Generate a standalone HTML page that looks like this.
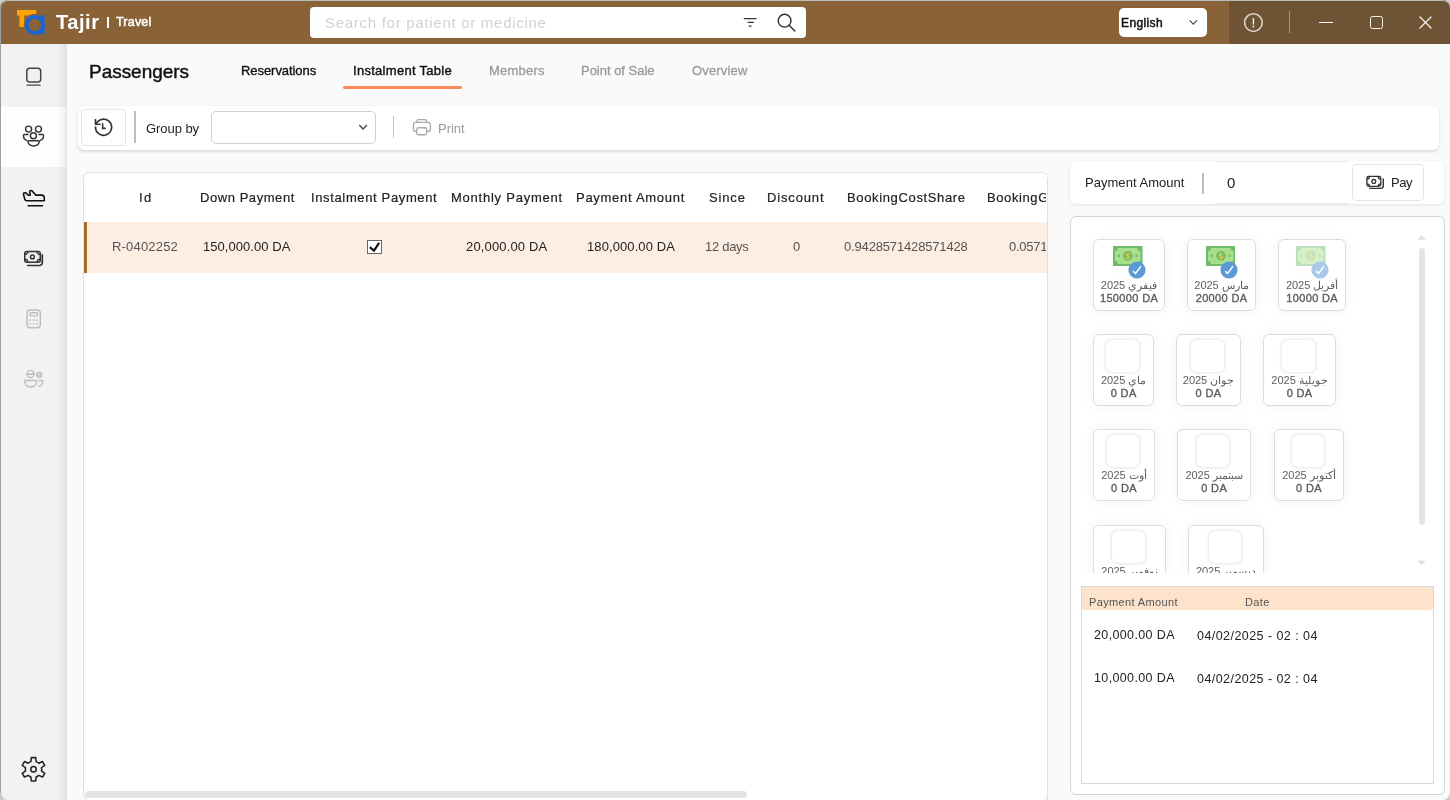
<!DOCTYPE html>
<html><head><meta charset="utf-8">
<style>
*{box-sizing:border-box;margin:0;padding:0}
html,body{width:1450px;height:800px;overflow:hidden;background:#c9cdd2;font-family:"Liberation Sans",sans-serif}
.win{position:absolute;left:0;top:0;width:1450px;height:800px;background:#fafafa;border-radius:8px;overflow:hidden}
.frame{position:absolute;left:0;top:0;width:1450px;height:800px;border-radius:8px;border-left:1px solid #9da1a5;border-top:1px solid #b9bcc0;pointer-events:none}
.a{position:absolute}
.t{position:absolute;white-space:nowrap;line-height:1;font-family:"Liberation Sans",sans-serif;will-change:transform}
.hdr{position:absolute;left:0;top:0;width:1450px;height:44px;background:#8a6238}
.hdr2{position:absolute;left:1229px;top:0;width:221px;height:44px;background:#6f5335}
.side{position:absolute;left:0;top:44px;width:67px;height:756px;background:#f2f2f2}
.sideshade{position:absolute;left:52px;top:44px;width:15px;height:756px;background:linear-gradient(to right,rgba(0,0,0,0) 0,rgba(0,0,0,0.015) 50%,rgba(0,0,0,0.075) 100%)}
.card{position:absolute;background:#fff;border-radius:6px}
.mc{will-change:transform;position:absolute;height:72px;border:1px solid #dcdcdc;border-radius:6px;background:#fff;box-shadow:0 0 12px 2px rgba(0,0,0,0.035)}
.mc .ico{position:absolute;border-radius:6px}
.ml1{position:absolute;left:0;right:0;top:39.3px;text-align:center;font-size:11px;line-height:13px;color:#606060;white-space:nowrap;letter-spacing:0}
.ml2{position:absolute;left:0;right:0;top:52.1px;text-align:center;font-size:11px;line-height:13px;color:#5c5c5c;white-space:nowrap;font-weight:normal;letter-spacing:0.35px;-webkit-text-stroke:0.35px #5c5c5c}
.dg{letter-spacing:0.75px}
</style></head><body>
<div class="win">
  <!-- header -->
  <div class="hdr"></div>
  <div class="hdr2"></div>
  <!-- logo -->
  <svg class="a" style="left:0;top:0" width="60" height="44" viewBox="0 0 60 44">
    <path d="M17 10H36.3V15.5H24.2V26.9H19.4V15.5H17Z" fill="#ffa400"/>
    <circle cx="35" cy="25" r="11.2" fill="#8a6238"/>
    <rect x="39.8" y="13.8" width="5.8" height="21.4" fill="#8a6238"/>
    <circle cx="34.9" cy="25" r="8.1" fill="none" stroke="#1565d8" stroke-width="3.8"/>
    <rect x="40.8" y="15" width="3.8" height="19.2" fill="#1565d8"/>
  </svg>
  <div class="a" style="left:107px;top:17px;width:2px;height:11px;background:#fff"></div>
  <!-- search -->
  <div class="a" style="left:310px;top:7px;width:496px;height:31px;background:#fff;border-radius:4px"></div>
  <svg class="a" style="left:740px;top:12px" width="20" height="20" viewBox="0 0 20 20">
    <path d="M4.2 6.6H16.1M8 10.3H13.4M9.2 14H11.1" stroke="#333" stroke-width="1.25" stroke-linecap="round"/>
  </svg>
  <svg class="a" style="left:774px;top:10px" width="24" height="24" viewBox="0 0 24 24">
    <circle cx="10.6" cy="10.7" r="6.4" fill="none" stroke="#333" stroke-width="1.45"/>
    <path d="M15.1 15.2L20.8 20.9" stroke="#333" stroke-width="1.45" stroke-linecap="round"/>
  </svg>
  <!-- language -->
  <div class="a" style="left:1118.5px;top:8.3px;width:88px;height:28.5px;background:#fff;border-radius:5px"></div>
  <svg class="a" style="left:1186px;top:16px" width="14" height="12" viewBox="0 0 14 12">
    <path d="M3.7 4.4L7.3 8.2L10.9 4.4" stroke="#444" stroke-width="1.1" fill="none"/>
  </svg>
  <!-- info -->
  <svg class="a" style="left:1241px;top:10px" width="24" height="24" viewBox="0 0 24 24">
    <circle cx="12.4" cy="12.6" r="8.8" fill="none" stroke="#e2dbd2" stroke-width="1.5"/>
    <path d="M12.4 8.6V14" stroke="#f4f0ea" stroke-width="1.4" stroke-linecap="round"/>
    <circle cx="12.4" cy="16.5" r="0.95" fill="#f4f0ea"/>
  </svg>
  <div class="a" style="left:1289px;top:11px;width:1px;height:22px;background:#a8957f"></div>
  <div class="a" style="left:1319px;top:21.8px;width:14px;height:1.3px;background:#fff"></div>
  <div class="a" style="left:1370px;top:16px;width:12.5px;height:13px;border:1.3px solid #f4f0ea;border-radius:2.5px"></div>
  <svg class="a" style="left:1416px;top:13px" width="20" height="20" viewBox="0 0 20 20">
    <path d="M4 4L15 15M15 4L4 15" stroke="#f4f0ea" stroke-width="1.3" stroke-linecap="round"/>
  </svg>

  <!-- sidebar -->
  <div class="side"></div>
  <div class="a" style="left:0;top:106.5px;width:66px;height:60.5px;background:#fefefe"></div>
  <div class="sideshade"></div>
  <svg class="a" style="left:13px;top:55px" width="40" height="40" viewBox="0 0 40 40">
    <rect x="13.8" y="13.3" width="13.9" height="13.6" rx="3" fill="none" stroke="#444" stroke-width="1.5"/>
    <path d="M13.5 30.1H27.5" stroke="#444" stroke-width="1.3"/>
  </svg>
  <svg class="a" style="left:13px;top:116px" width="40" height="40" viewBox="0 0 40 40">
    <g fill="none" stroke="#333" stroke-width="1.45">
    <circle cx="15.6" cy="13.1" r="3"/><circle cx="25.5" cy="13.1" r="3"/><circle cx="20.4" cy="19.75" r="3"/>
    <path d="M10.5 18.5H15.6M10.5 18.5V19.5A5 5 0 0 0 14 24.5"/>
    <path d="M30.5 18.5H25.4M30.5 18.5V19.5A5 5 0 0 1 27 24.5"/>
    <path d="M15.3 24.75H25.9A0.6 0.6 0 0 1 26.4 25.4V25.6A6 5.8 0 0 1 14.8 25.6V25.4A0.6 0.6 0 0 1 15.3 24.75Z"/>
    </g>
  </svg>
  <svg class="a" style="left:13px;top:178px" width="40" height="40" viewBox="0 0 40 40">
    <path d="M10.5 16.2C10.3 15.3 10.9 14.6 11.8 14.7L12.8 14.9L15.3 17.2H17.2L16.7 13.6C16.6 12.9 17.2 12.4 17.9 12.5L18.9 12.7L22.7 17.1H28.7A2.9 2.9 0 0 1 31.3 20V22.75H13.6A1.9 1.9 0 0 1 11.8 21.3Z" fill="none" stroke="#111" stroke-width="1.6" stroke-linejoin="round"/>
    <path d="M15.2 27.75H29.5" stroke="#111" stroke-width="1.6" stroke-linecap="round"/>
  </svg>
  <svg class="a" style="left:13px;top:238px" width="40" height="40" viewBox="0 0 40 40">
    <g fill="none" stroke="#333" stroke-width="1.5">
      <rect x="11.75" y="13.5" width="15.5" height="10.75" rx="2"/>
      <circle cx="19.4" cy="18.9" r="1.9"/>
      <path d="M11.75 16.6A3.1 3.1 0 0 0 14.85 13.5M24.15 13.5A3.1 3.1 0 0 0 27.25 16.6M11.75 21.15A3.1 3.1 0 0 1 14.85 24.25M24.15 24.25A3.1 3.1 0 0 1 27.25 21.15"/>
      <path d="M29.3 16.2V24.7A2.8 2.8 0 0 1 26.5 27.5H14" stroke-width="1.7"/>
    </g>
  </svg>
  <svg class="a" style="left:13px;top:298px" width="40" height="40" viewBox="0 0 40 40">
    <g fill="none" stroke="#bdbdbd" stroke-width="1.4">
      <rect x="14" y="12" width="13.3" height="17.8" rx="3"/>
      <rect x="16.8" y="14.7" width="7.7" height="3.2" rx="1.2"/>
    </g>
    <g fill="#bdbdbd">
      <rect x="16.3" y="21.3" width="1.6" height="1.6"/><rect x="19.8" y="21.3" width="1.6" height="1.6"/><rect x="23.3" y="21.3" width="1.6" height="1.6"/>
      <rect x="16.3" y="25" width="1.6" height="1.6"/><rect x="19.8" y="25" width="1.6" height="1.6"/><rect x="23.3" y="25" width="1.6" height="1.6"/>
    </g>
  </svg>
  <svg class="a" style="left:13px;top:360px" width="40" height="40" viewBox="0 0 40 40">
    <g fill="none" stroke="#bdbdbd" stroke-width="1.4">
      <circle cx="17.5" cy="14" r="3.6"/>
      <path d="M14 13.5C16 14.5 19 14.5 21 13.5"/>
      <circle cx="26.2" cy="14.8" r="2.4"/>
      <path d="M23.7 14.8H29"/>
      <path d="M11.9 20.5H23.5V22A4.8 4.8 0 0 1 18.7 26.8H16.7A4.8 4.8 0 0 1 11.9 22Z"/>
      <path d="M25.5 20.5H29.6V22A4.5 4.5 0 0 1 25.3 26.2"/>
    </g>
  </svg>
  <svg class="a" style="left:13px;top:749px" width="40" height="40" viewBox="0 0 40 40">
    <path d="M17.86 12.64L18.33 8.60L22.67 8.60L23.14 12.64A8.1 8.1 0 0 1 25.81 14.19L29.55 12.57L31.72 16.33L28.45 18.75A8.1 8.1 0 0 1 28.45 21.85L31.72 24.27L29.55 28.03L25.81 26.41A8.1 8.1 0 0 1 23.14 27.96L22.67 32.00L18.33 32.00L17.86 27.96A8.1 8.1 0 0 1 15.19 26.41L11.45 28.03L9.28 24.27L12.55 21.85A8.1 8.1 0 0 1 12.55 18.75L9.28 16.33L11.45 12.57L15.19 14.19A8.1 8.1 0 0 1 17.86 12.64Z" fill="none" stroke="#222" stroke-width="1.55" stroke-linejoin="round"/>
    <circle cx="20.5" cy="20.3" r="2.75" fill="none" stroke="#222" stroke-width="1.5"/>
  </svg>

  <div class="a" style="left:342.8px;top:85.5px;width:119.2px;height:3px;background:#ff8a5c;border-radius:2px"></div>
  <!-- toolbar card -->
  <div class="card" style="left:78.3px;top:105.5px;width:1361px;height:44px;box-shadow:0 1.5px 3px rgba(0,0,0,0.12)"></div>
  <div class="a" style="left:81.3px;top:109px;width:44.5px;height:36.6px;border:1px solid #e4e4e4;border-radius:4px"></div>
  <svg class="a" style="left:88px;top:112px" width="30" height="30" viewBox="0 0 30 30">
    <g fill="none" stroke="#333" stroke-width="1.6">
    <path d="M7.5 14.3A8.1 8.1 0 1 0 9.9 9.4L7.9 11.6"/>
    <path d="M7.5 7.1V12.2H12.5"/>
    <path d="M14.6 11.2V16.4H17.8"/>
    </g>
  </svg>
  <div class="a" style="left:134px;top:111.3px;width:2px;height:32.2px;background:#b9bdc8"></div>
  <div class="a" style="left:211.4px;top:111px;width:164.3px;height:32.5px;border:1px solid #cfcfcf;border-radius:5px;background:#fff"></div>
  <svg class="a" style="left:355px;top:120px" width="16" height="14" viewBox="0 0 16 14">
    <path d="M4.3 5L8.1 9L11.9 5" stroke="#444" stroke-width="1.3" fill="none"/>
  </svg>
  <div class="a" style="left:393px;top:116px;width:1px;height:22px;background:#c3c7d1"></div>
  <svg class="a" style="left:406px;top:112px" width="30" height="30" viewBox="0 0 30 30">
    <g fill="none" stroke="#aaa" stroke-width="1.35">
      <path d="M11 10.3V9.2A1.6 1.6 0 0 1 12.6 7.6H19A1.6 1.6 0 0 1 20.6 9.2V10.3"/>
      <path d="M10.7 19.5H9.8A2.3 2.3 0 0 1 7.5 17.2V12.6A2.3 2.3 0 0 1 9.8 10.3H22.1A2.3 2.3 0 0 1 24.4 12.6V17.2A2.3 2.3 0 0 1 22.1 19.5H20.9"/>
      <rect x="10.7" y="15.7" width="9.9" height="7" rx="1.8"/>
    </g>
  </svg>

  <!-- table card -->
  <div class="card" style="left:83px;top:172.2px;width:964.5px;height:628.5px;border:1px solid #e0e0e0;border-radius:6px;overflow:hidden">
    <div class="a" style="left:0;top:49px;width:964px;height:50.5px;background:#fdeee3"></div>
    <div class="a" style="left:0;top:49px;width:3.3px;height:50.5px;background:#a8692a"></div>
    <div class="a" style="left:1px;top:618px;width:662px;height:7px;background:#e3e3e3;border-radius:4px"></div>
  </div>
  <!-- checkbox -->
  <div class="a" style="left:367.2px;top:240.2px;width:14.6px;height:13.4px;border:1px solid #666;background:#fff;border-radius:0"></div>
  <svg class="a" style="left:366px;top:239px" width="17" height="16" viewBox="0 0 17 16">
    <path d="M3.8 8.2L8 11.7L13.1 3.9" stroke="#111" stroke-width="2.2" fill="none"/>
  </svg>
  <!-- table right clip mask -->
  <div class="a" style="left:1047px;top:172px;width:20px;height:628px;background:#fafafa"></div>
  <div class="a" style="left:1046.5px;top:178px;width:1px;height:622px;background:#e0e0e0"></div>

  <!-- payment amount card -->
  <div class="card" style="left:1070px;top:161px;width:374px;height:43.4px;box-shadow:0 1px 3px rgba(0,0,0,0.10)"></div>
  <div class="a" style="left:1202px;top:172.5px;width:2px;height:21.2px;background:#b9bdc8"></div>
  <div class="a" style="left:1214.5px;top:161px;width:133px;height:43.4px;border-top:1px solid #e6e9ee;border-bottom:1px solid #e6e9ee"></div>
  <div class="a" style="left:1352px;top:164px;width:71.5px;height:36.7px;border:1px solid #e4e4e4;border-radius:4px;background:#fff"></div>
  <svg class="a" style="left:1361px;top:168px" width="28" height="28" viewBox="0 0 28 28">
    <g fill="none" stroke="#333" stroke-width="1.3">
      <rect x="5.9" y="8.4" width="13.9" height="10" rx="1.8"/>
      <circle cx="12.8" cy="13.4" r="1.9"/>
      <path d="M5.9 11A2.6 2.6 0 0 0 8.5 8.4M17.2 8.4A2.6 2.6 0 0 0 19.8 11M5.9 15.8A2.6 2.6 0 0 1 8.5 18.4M17.2 18.4A2.6 2.6 0 0 1 19.8 15.8"/>
      <path d="M22.3 10.6V17.8A2.6 2.6 0 0 1 19.7 20.4H8.3" stroke-width="1.4"/>
    </g>
  </svg>

  <!-- months panel -->
  <div class="card" style="left:1070px;top:216px;width:374.5px;height:579px;border:1px solid #d4d4d4;border-radius:6px"></div>
  <div class="a" style="left:1080px;top:226px;width:330px;height:347px;overflow:hidden">
    <div class="a" style="left:-1080px;top:-226px;width:1450px;height:800px">
<div class="mc" style="left:1093.4px;top:239.1px;width:72.1px;"><div class="ico" style="left:19.0px;top:5.8px;width:30px;height:32.5px;background:#fff;box-shadow:0 0 2px rgba(0,0,0,0.06)"><div style="position:absolute;left:0;top:0;width:29.5px;height:20px;opacity:1;overflow:hidden"><svg width="29.5" height="20" viewBox="0 0 29.5 20" style="position:absolute;left:0;top:0"><rect x="0" y="0" width="29.5" height="20" fill="#6dbb6b"/><path d="M5 2H24.5A3 3 0 0 0 27.5 5V15A3 3 0 0 0 24.5 18H5A3 3 0 0 0 2 15V5A3 3 0 0 0 5 2Z" fill="#a9de8c"/><circle cx="14.9" cy="9.85" r="4.8" fill="#6dbb6b"/><circle cx="5.9" cy="9.85" r="1.3" fill="#6dbb6b"/><circle cx="23.6" cy="9.85" r="1.3" fill="#6dbb6b"/><text x="14.9" y="12.9" font-size="8.5" font-family="Liberation Sans" font-weight="bold" fill="#f4c53e" text-anchor="middle">$</text></svg></div><svg width="20" height="20" viewBox="0 0 20 20" style="position:absolute;left:13.7px;top:13.9px"><circle cx="10" cy="10" r="8.6" fill="#5b9bd5"/><path d="M6.6 11.6L8.6 13.4L13.6 6.6" stroke="#fff" stroke-width="1.5" fill="none" stroke-linecap="round" stroke-linejoin="round"/></svg></div><div class="ml1">فيفري <span class=dg>2025</span></div><div class="ml2">150000 DA</div></div>
<div class="mc" style="left:1187.4px;top:239.1px;width:69.1px;"><div class="ico" style="left:17.5px;top:5.8px;width:30px;height:32.5px;background:#fff;box-shadow:0 0 2px rgba(0,0,0,0.06)"><div style="position:absolute;left:0;top:0;width:29.5px;height:20px;opacity:1;overflow:hidden"><svg width="29.5" height="20" viewBox="0 0 29.5 20" style="position:absolute;left:0;top:0"><rect x="0" y="0" width="29.5" height="20" fill="#6dbb6b"/><path d="M5 2H24.5A3 3 0 0 0 27.5 5V15A3 3 0 0 0 24.5 18H5A3 3 0 0 0 2 15V5A3 3 0 0 0 5 2Z" fill="#a9de8c"/><circle cx="14.9" cy="9.85" r="4.8" fill="#6dbb6b"/><circle cx="5.9" cy="9.85" r="1.3" fill="#6dbb6b"/><circle cx="23.6" cy="9.85" r="1.3" fill="#6dbb6b"/><text x="14.9" y="12.9" font-size="8.5" font-family="Liberation Sans" font-weight="bold" fill="#f4c53e" text-anchor="middle">$</text></svg></div><svg width="20" height="20" viewBox="0 0 20 20" style="position:absolute;left:13.7px;top:13.9px"><circle cx="10" cy="10" r="8.6" fill="#5b9bd5"/><path d="M6.6 11.6L8.6 13.4L13.6 6.6" stroke="#fff" stroke-width="1.5" fill="none" stroke-linecap="round" stroke-linejoin="round"/></svg></div><div class="ml1">مارس <span class=dg>2025</span></div><div class="ml2">20000 DA</div></div>
<div class="mc" style="left:1278.4px;top:239.1px;width:68.3px;"><div class="ico" style="left:17.1px;top:5.8px;width:30px;height:32.5px;background:#fff;box-shadow:0 0 2px rgba(0,0,0,0.06)"><div style="position:absolute;left:0;top:0;width:29.5px;height:20px;opacity:0.45;overflow:hidden"><svg width="29.5" height="20" viewBox="0 0 29.5 20" style="position:absolute;left:0;top:0"><rect x="0" y="0" width="29.5" height="20" fill="#6dbb6b"/><path d="M5 2H24.5A3 3 0 0 0 27.5 5V15A3 3 0 0 0 24.5 18H5A3 3 0 0 0 2 15V5A3 3 0 0 0 5 2Z" fill="#a9de8c"/><circle cx="14.9" cy="9.85" r="4.8" fill="#6dbb6b"/><circle cx="5.9" cy="9.85" r="1.3" fill="#6dbb6b"/><circle cx="23.6" cy="9.85" r="1.3" fill="#6dbb6b"/><text x="14.9" y="12.9" font-size="8.5" font-family="Liberation Sans" font-weight="bold" fill="#f4c53e" text-anchor="middle">$</text></svg></div><svg width="20" height="20" viewBox="0 0 20 20" style="position:absolute;left:13.7px;top:13.9px"><circle cx="10" cy="10" r="8.6" fill="#a9c8ea"/><path d="M6.6 11.6L8.6 13.4L13.6 6.6" stroke="#fff" stroke-width="1.5" fill="none" stroke-linecap="round" stroke-linejoin="round"/></svg></div><div class="ml1">أفريل <span class=dg>2025</span></div><div class="ml2">10000 DA</div></div>
<div class="mc" style="left:1093.4px;top:334.3px;width:61.3px;"><div class="ico" style="left:12.4px;top:5.3px;width:32.4px;height:32.2px;background:#fff;border-radius:6px;box-shadow:0 0 3px 0.5px rgba(0,0,0,0.10)"></div><div class="ml1">ماي <span class=dg>2025</span></div><div class="ml2">0 DA</div></div>
<div class="mc" style="left:1176.3px;top:334.3px;width:65.1px;"><div class="ico" style="left:14.4px;top:5.3px;width:32.4px;height:32.2px;background:#fff;border-radius:6px;box-shadow:0 0 3px 0.5px rgba(0,0,0,0.10)"></div><div class="ml1">جوان <span class=dg>2025</span></div><div class="ml2">0 DA</div></div>
<div class="mc" style="left:1263.4px;top:334.3px;width:73.2px;"><div class="ico" style="left:18.4px;top:5.3px;width:32.4px;height:32.2px;background:#fff;border-radius:6px;box-shadow:0 0 3px 0.5px rgba(0,0,0,0.10)"></div><div class="ml1">جويلية <span class=dg>2025</span></div><div class="ml2">0 DA</div></div>
<div class="mc" style="left:1093.4px;top:429.2px;width:62.0px;"><div class="ico" style="left:12.8px;top:5.3px;width:32.4px;height:32.2px;background:#fff;border-radius:6px;box-shadow:0 0 3px 0.5px rgba(0,0,0,0.10)"></div><div class="ml1">أوت <span class=dg>2025</span></div><div class="ml2">0 DA</div></div>
<div class="mc" style="left:1177.3px;top:429.2px;width:74.3px;"><div class="ico" style="left:18.9px;top:5.3px;width:32.4px;height:32.2px;background:#fff;border-radius:6px;box-shadow:0 0 3px 0.5px rgba(0,0,0,0.10)"></div><div class="ml1">سبتمبر <span class=dg>2025</span></div><div class="ml2">0 DA</div></div>
<div class="mc" style="left:1273.5px;top:429.2px;width:69.9px;"><div class="ico" style="left:16.8px;top:5.3px;width:32.4px;height:32.2px;background:#fff;border-radius:6px;box-shadow:0 0 3px 0.5px rgba(0,0,0,0.10)"></div><div class="ml1">أكتوبر <span class=dg>2025</span></div><div class="ml2">0 DA</div></div>
<div class="mc" style="left:1093.4px;top:525.2px;width:73.1px;"><div class="ico" style="left:18.3px;top:5.3px;width:32.4px;height:32.2px;background:#fff;border-radius:6px;box-shadow:0 0 3px 0.5px rgba(0,0,0,0.10)"></div><div class="ml1">نوفمبر <span class=dg>2025</span></div><div class="ml2">0 DA</div></div>
<div class="mc" style="left:1188.1px;top:525.2px;width:76.3px;"><div class="ico" style="left:20.0px;top:5.3px;width:32.4px;height:32.2px;background:#fff;border-radius:6px;box-shadow:0 0 3px 0.5px rgba(0,0,0,0.10)"></div><div class="ml1">ديسمبر <span class=dg>2025</span></div><div class="ml2">0 DA</div></div>
    </div>
  </div>
  <svg class="a" style="left:1416px;top:234px" width="12" height="8" viewBox="0 0 12 8"><path d="M1.2 5.8L5.5 1.8L9.8 5.8Z" fill="#e0e0e0"/></svg>
  <div class="a" style="left:1419px;top:248px;width:6px;height:277px;background:#e4e4e4;border-radius:3px"></div>
  <svg class="a" style="left:1416px;top:559px" width="12" height="8" viewBox="0 0 12 8"><path d="M1.2 1.8L5.5 5.8L9.8 1.8Z" fill="#e0e0e0"/></svg>

  <!-- history -->
  <div class="a" style="left:1081px;top:586px;width:353px;height:198px;border:1px solid #d9d9d9;background:#fff"></div>
  <div class="a" style="left:1082px;top:587px;width:351px;height:22.6px;background:#fde3cb;border-radius:0 0 3px 3px"></div>

<div class="a" style="left:0;top:0;width:1046px;height:800px;overflow:hidden"><div class="t" style="left:138.86px;top:190.50px;font-size:13px;color:#222;font-weight:normal;letter-spacing:1.500px;-webkit-text-stroke:0.2px #222;">Id</div>
<div class="t" style="left:199.76px;top:190.50px;font-size:13px;color:#222;font-weight:normal;letter-spacing:0.558px;-webkit-text-stroke:0.2px #222;">Down Payment</div>
<div class="t" style="left:311.20px;top:190.50px;font-size:13px;color:#222;font-weight:normal;letter-spacing:0.635px;-webkit-text-stroke:0.2px #222;">Instalment Payment</div>
<div class="t" style="left:451.08px;top:190.50px;font-size:13px;color:#222;font-weight:normal;letter-spacing:0.766px;-webkit-text-stroke:0.2px #222;">Monthly Payment</div>
<div class="t" style="left:576.08px;top:190.50px;font-size:13px;color:#222;font-weight:normal;letter-spacing:0.711px;-webkit-text-stroke:0.2px #222;">Payment Amount</div>
<div class="t" style="left:708.76px;top:190.50px;font-size:13px;color:#222;font-weight:normal;letter-spacing:0.845px;-webkit-text-stroke:0.2px #222;">Since</div>
<div class="t" style="left:767.08px;top:190.50px;font-size:13px;color:#222;font-weight:normal;letter-spacing:0.846px;-webkit-text-stroke:0.2px #222;">Discount</div>
<div class="t" style="left:846.64px;top:190.50px;font-size:13px;color:#222;font-weight:normal;letter-spacing:0.645px;-webkit-text-stroke:0.2px #222;">BookingCostShare</div>
<div class="t" style="left:987.20px;top:190.50px;font-size:13px;color:#222;font-weight:normal;letter-spacing:0.600px;-webkit-text-stroke:0.2px #222;">BookingGainShare</div>
<div class="t" style="left:112.20px;top:239.87px;font-size:13px;color:#555;font-weight:normal;letter-spacing:0.185px;">R-0402252</div>
<div class="t" style="left:203.42px;top:240.21px;font-size:13px;color:#222;font-weight:normal;letter-spacing:0.048px;">150,000.00 DA</div>
<div class="t" style="left:465.86px;top:240.21px;font-size:13px;color:#222;font-weight:normal;letter-spacing:0.156px;">20,000.00 DA</div>
<div class="t" style="left:586.76px;top:240.21px;font-size:13px;color:#222;font-weight:normal;letter-spacing:0.095px;">180,000.00 DA</div>
<div class="t" style="left:704.76px;top:240.21px;font-size:13px;color:#555;font-weight:normal;letter-spacing:-0.290px;">12 days</div>
<div class="t" style="left:793.00px;top:240.21px;font-size:13px;color:#555;font-weight:normal;letter-spacing:-0.300px;">0</div>
<div class="t" style="left:844.00px;top:240.21px;font-size:13px;color:#555;font-weight:normal;letter-spacing:-0.162px;">0.9428571428571428</div>
<div class="t" style="left:1009.00px;top:240.40px;font-size:13px;color:#555;font-weight:normal;letter-spacing:-0.250px;">0.05714285714285714</div></div>
<div class="t" style="left:56.00px;top:12.37px;font-size:20px;color:#fff;font-weight:bold;letter-spacing:0.560px;">Tajir</div>
<div class="t" style="left:116.22px;top:15.64px;font-size:12.5px;color:#fff;font-weight:normal;letter-spacing:0.200px;-webkit-text-stroke:0.5px #fff;">Travel</div>
<div class="t" style="left:325.30px;top:15.28px;font-size:15px;color:#d2d2d2;font-weight:normal;letter-spacing:0.718px;">Search for patient or medicine</div>
<div class="t" style="left:1121.42px;top:17.27px;font-size:12px;color:#111;font-weight:normal;letter-spacing:0.373px;-webkit-text-stroke:0.5px #111;">English</div>
<div class="t" style="left:88.86px;top:62.44px;font-size:19px;color:#111;font-weight:normal;letter-spacing:-0.033px;-webkit-text-stroke:0.45px #111;">Passengers</div>
<div class="t" style="left:240.88px;top:63.62px;font-size:13px;color:#111;font-weight:normal;letter-spacing:-0.060px;-webkit-text-stroke:0.35px #111;">Reservations</div>
<div class="t" style="left:352.74px;top:63.62px;font-size:13px;color:#111;font-weight:normal;letter-spacing:0.284px;-webkit-text-stroke:0.4px #111;">Instalment Table</div>
<div class="t" style="left:488.54px;top:63.80px;font-size:13px;color:#9a9a9a;font-weight:normal;letter-spacing:0.210px;-webkit-text-stroke:0.3px #9a9a9a;">Members</div>
<div class="t" style="left:581.20px;top:63.80px;font-size:13px;color:#9a9a9a;font-weight:normal;letter-spacing:-0.015px;-webkit-text-stroke:0.3px #9a9a9a;">Point of Sale</div>
<div class="t" style="left:692.20px;top:63.80px;font-size:13px;color:#9a9a9a;font-weight:normal;letter-spacing:0.163px;-webkit-text-stroke:0.3px #9a9a9a;">Overview</div>
<div class="t" style="left:146.20px;top:121.72px;font-size:13px;color:#222;font-weight:normal;letter-spacing:-0.057px;">Group by</div>
<div class="t" style="left:437.64px;top:121.72px;font-size:13px;color:#9a9a9a;font-weight:normal;letter-spacing:-0.020px;">Print</div>
<div class="t" style="left:1085.42px;top:176.20px;font-size:13px;color:#222;font-weight:normal;letter-spacing:0.035px;">Payment Amount</div>
<div class="t" style="left:1227.20px;top:174.90px;font-size:15px;color:#222;font-weight:normal;letter-spacing:0.000px;">0</div>
<div class="t" style="left:1390.64px;top:175.72px;font-size:13px;color:#222;font-weight:normal;letter-spacing:-0.420px;">Pay</div>
<div class="t" style="left:1089.08px;top:596.75px;font-size:11px;color:#555;font-weight:normal;letter-spacing:0.362px;">Payment Amount</div>
<div class="t" style="left:1244.98px;top:596.75px;font-size:11px;color:#555;font-weight:normal;letter-spacing:0.340px;">Date</div>
<div class="t" style="left:1093.76px;top:629.10px;font-size:12.5px;color:#222;font-weight:normal;letter-spacing:0.367px;">20,000.00 DA</div>
<div class="t" style="left:1197.10px;top:630.22px;font-size:12.5px;color:#222;font-weight:normal;letter-spacing:0.445px;">04/02/2025 - 02 : 04</div>
<div class="t" style="left:1093.76px;top:672.10px;font-size:12.5px;color:#222;font-weight:normal;letter-spacing:0.367px;">10,000.00 DA</div>
<div class="t" style="left:1197.10px;top:673.22px;font-size:12.5px;color:#222;font-weight:normal;letter-spacing:0.445px;">04/02/2025 - 02 : 04</div>
<div class="frame"></div>
</div>
</body></html>
